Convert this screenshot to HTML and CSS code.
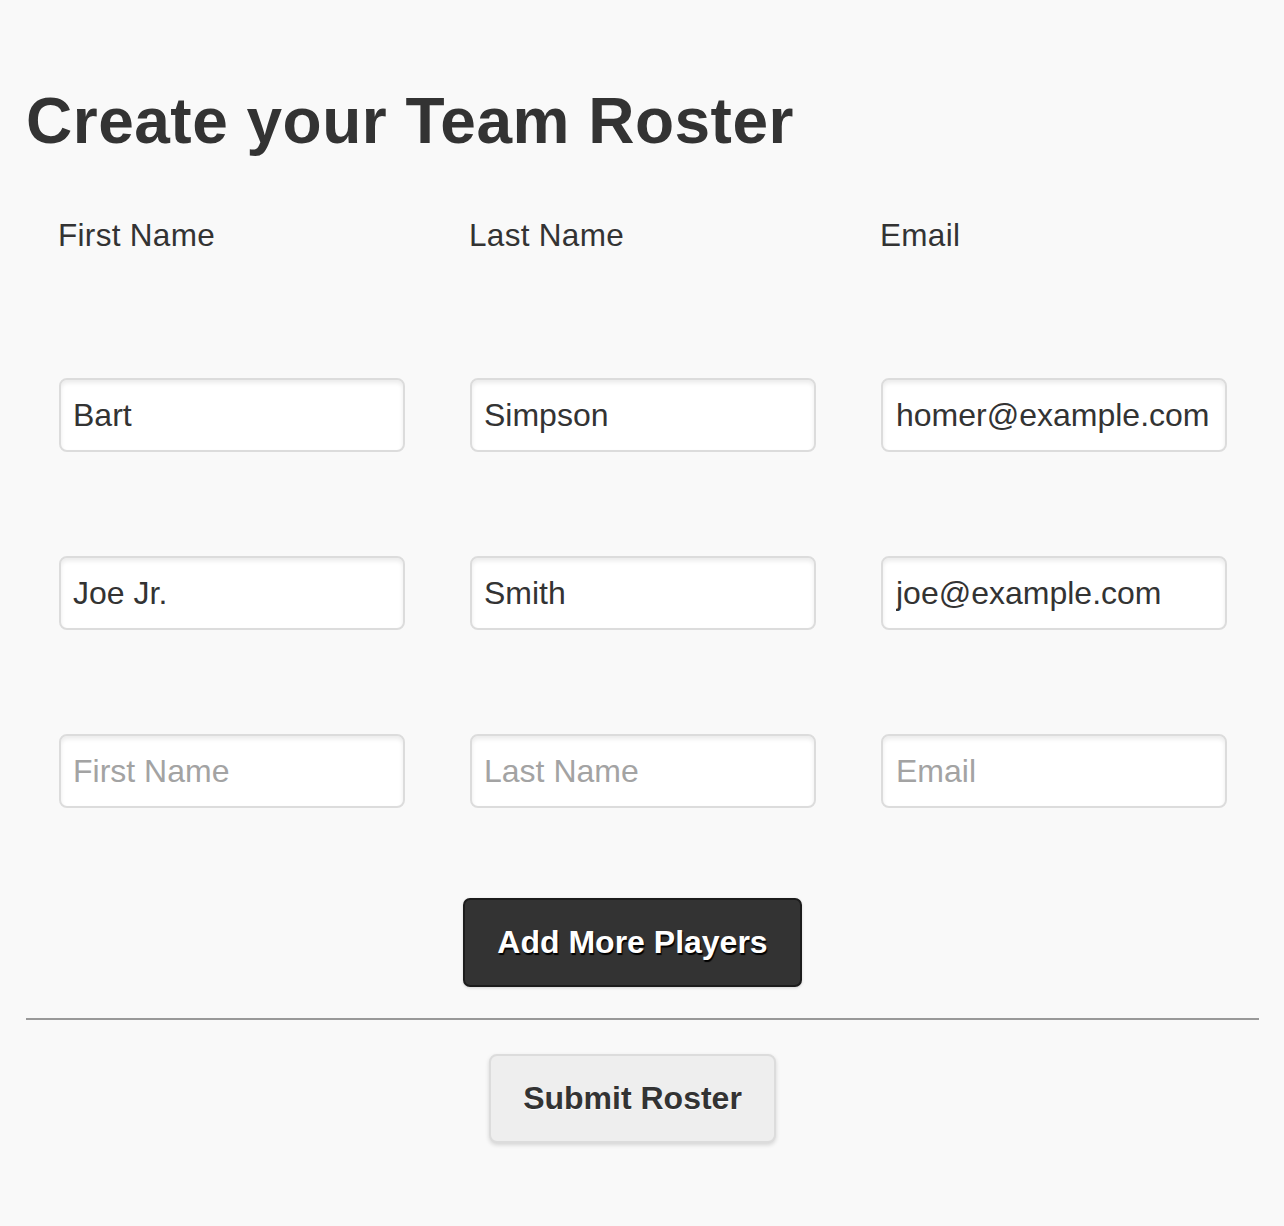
FILE: index.html
```html
<!DOCTYPE html>
<html lang="en">
<head>
<meta charset="utf-8">
<title>Create your Team Roster</title>
<link rel="stylesheet" href="styles.css">
</head>
<body>
<div class="page">
  <h1 class="title">Create your Team Roster</h1>
  <form class="roster">
    <div class="row head-row">
      <div class="cell"><label class="col-label">First Name</label></div>
      <div class="cell"><label class="col-label">Last Name</label></div>
      <div class="cell"><label class="col-label">Email</label></div>
    </div>
    <div class="rows">
      <div class="row">
        <div class="cell"><input class="field" type="text" value="Bart" placeholder="First Name"></div>
        <div class="cell"><input class="field" type="text" value="Simpson" placeholder="Last Name"></div>
        <div class="cell"><input class="field field-email" type="text" value="homer@example.com" placeholder="Email"></div>
      </div>
      <div class="row">
        <div class="cell"><input class="field" type="text" value="Joe Jr." placeholder="First Name"></div>
        <div class="cell"><input class="field" type="text" value="Smith" placeholder="Last Name"></div>
        <div class="cell"><input class="field field-email" type="text" value="joe@example.com" placeholder="Email"></div>
      </div>
      <div class="row">
        <div class="cell"><input class="field" type="text" placeholder="First Name"></div>
        <div class="cell"><input class="field" type="text" placeholder="Last Name"></div>
        <div class="cell"><input class="field field-email" type="text" placeholder="Email"></div>
      </div>
    </div>
    <div class="actions add-actions">
      <button type="button" class="btn btn-dark">Add More Players</button>
    </div>
    <hr class="divider">
    <div class="actions submit-actions">
      <button type="submit" class="btn btn-light">Submit Roster</button>
    </div>
  </form>
</div>
</body>
</html>
```
FILE: styles.css
```css
html, body {
  margin: 0;
  padding: 0;
  background: #f9f9f9;
}
body {
  font-family: "Liberation Sans", Arial, Helvetica, sans-serif;
  color: #333;
}
.page {
  padding: 84px 25px 0 26px;
  height: 1226px;
  box-sizing: border-box;
}
.title {
  margin: 0;
  font-size: 64px;
  line-height: 74px;
  font-weight: bold;
  letter-spacing: 0.5px;
  color: #333;
}
.roster {
  margin: 0;
}
.row {
  display: grid;
  grid-template-columns: repeat(3, 1fr);
}
.cell {
  padding: 0 32px 0 33px;
}
.head-row {
  margin-top: 59px;
}
.col-label {
  display: block;
  font-size: 31.5px;
  line-height: 36px;
  margin-left: -1px;
  letter-spacing: 0.3px;
  color: #333;
}
.rows {
  margin-top: 125px;
  display: flex;
  flex-direction: column;
  gap: 104px;
}
.field {
  display: block;
  box-sizing: border-box;
  width: 346px;
  height: 74px;
  margin: 0;
  padding: 0 11px 0 12px;
  border: 2px solid #dcdcdc;
  border-radius: 8px;
  background: #fff;
  box-shadow: inset 0 3px 4px rgba(0, 0, 0, 0.08);
  font-family: "Liberation Sans", Arial, Helvetica, sans-serif;
  font-size: 32px;
  color: #333;
  outline: none;
}
.field-email {
  padding-left: 13px;
}
.field::placeholder {
  color: #a3a3a3;
  opacity: 1;
}
.actions {
  text-align: center;
  padding-right: 20px;
}
.add-actions {
  margin-top: 90px;
}
.btn {
  display: inline-block;
  box-sizing: border-box;
  height: 89px;
  margin: 0;
  padding: 0 32px;
  font-family: "Liberation Sans", Arial, Helvetica, sans-serif;
  font-size: 32px;
  font-weight: bold;
  line-height: 85px;
  border-radius: 7px;
  cursor: pointer;
  vertical-align: top;
}
.btn-dark {
  background: #333;
  color: #fff;
  border: 2px solid #1c1c1c;
  text-shadow: 1px 2px 1px #000;
  box-shadow: 0 1px 3px rgba(0, 0, 0, 0.15);
}
.btn-light {
  background: #eee;
  color: #333;
  border: 2px solid #dcdcdc;
  text-shadow: 0 1px 0 #fff;
  box-shadow: 0 2px 4px rgba(0, 0, 0, 0.15);
  border-radius: 8px;
}
.divider {
  margin: 31px 0 0 0;
  border: 0;
  border-top: 2px solid #999;
  height: 0;
}
.submit-actions {
  margin-top: 34px;
}
```
